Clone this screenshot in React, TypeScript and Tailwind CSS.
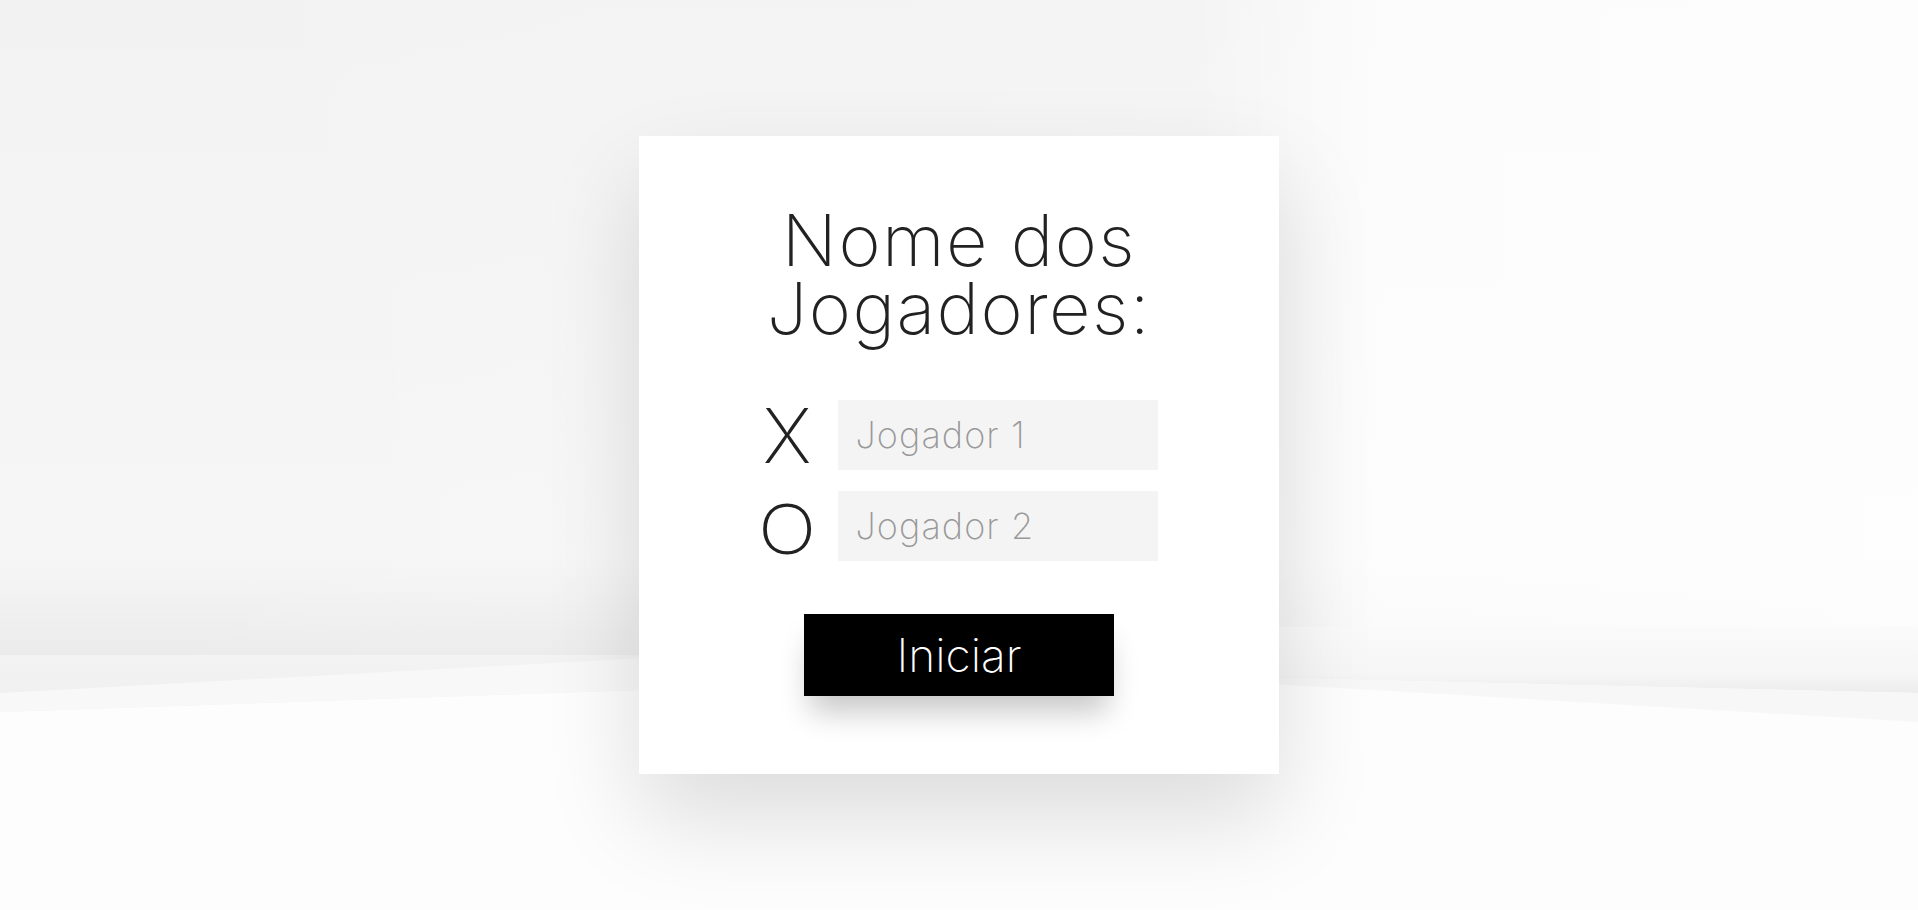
import { useState } from "react";

function Backdrop() {
  return (
    <svg
      className="absolute inset-0 h-full w-full"
      viewBox="0 0 1918 910"
      preserveAspectRatio="none"
    >
      <defs>
        <linearGradient id="wall" x1="0" y1="0" x2="0" y2="1">
          <stop offset="0" stopColor="#f2f2f2" />
          <stop offset="0.85" stopColor="#f6f6f6" />
          <stop offset="1" stopColor="#ebebeb" />
        </linearGradient>
        <linearGradient id="wallSide" x1="0" y1="0" x2="1" y2="0">
          <stop offset="0" stopColor="#ffffff" stopOpacity="0" />
          <stop offset="0.62" stopColor="#ffffff" stopOpacity="0.15" />
          <stop offset="0.72" stopColor="#ffffff" stopOpacity="0.75" />
          <stop offset="1" stopColor="#ffffff" stopOpacity="0.85" />
        </linearGradient>
        <linearGradient id="bandL" x1="0" y1="0" x2="0" y2="1">
          <stop offset="0" stopColor="#f3f3f3" />
          <stop offset="1" stopColor="#efefef" />
        </linearGradient>
        <linearGradient id="bandR" x1="0" y1="0" x2="0" y2="1">
          <stop offset="0" stopColor="#fafafa" />
          <stop offset="0.7" stopColor="#f6f6f6" />
          <stop offset="1" stopColor="#ececec" />
        </linearGradient>
      </defs>
      <rect x="0" y="0" width="1918" height="910" fill="#fdfdfd" />
      <rect x="0" y="0" width="1918" height="655" fill="url(#wall)" />
      <rect x="0" y="0" width="1918" height="655" fill="url(#wallSide)" />
      <polygon points="0,655 700,655 700,688 0,712" fill="url(#bandL)" />
      <polygon points="0,693 700,655 700,688 0,712" fill="#f8f8f8" />
      <polygon points="1200,627 1918,627 1918,693 1200,676" fill="url(#bandR)" />
      <polygon points="1200,676 1918,693 1918,722 1200,680" fill="#f7f7f7" />
    </svg>
  );
}

export default function App() {
  const [players, setPlayers] = useState({ x: "", o: "" });

  return (
    <div className="relative h-[910px] w-full overflow-hidden font-['Inter',sans-serif] font-extralight">
      <Backdrop />
      <div className="relative flex h-full items-center justify-center">
        <div className="flex w-[640px] flex-col items-center bg-white pt-[70px] pb-[78px] shadow-[0_45px_90px_rgba(0,0,0,0.13)]">
          <h1 className="text-center text-[72px] leading-[68px] tracking-[0.02em] text-[#222]">
            Nome dos
            <br />
            Jogadores:
          </h1>

          <div className="mt-[58px] flex flex-col gap-[21px]">
            <div className="flex items-center gap-[24px]">
              <span className="flex h-[70px] w-[53px] items-center justify-center text-[76px] leading-none text-[#222]">
                X
              </span>
              <input
                value={players.x}
                onChange={(e) => setPlayers({ ...players, x: e.target.value })}
                placeholder="Jogador 1"
                className="h-[70px] w-[320px] bg-[#f4f4f4] px-[18px] text-[36px] tracking-[0.03em] text-[#555] outline-none placeholder:text-[#999]"
              />
            </div>
            <div className="flex items-center gap-[24px]">
              <span className="flex h-[70px] w-[53px] items-center justify-center font-['Lato',sans-serif] text-[71px] leading-none font-light text-[#222]">
                O
              </span>
              <input
                value={players.o}
                onChange={(e) => setPlayers({ ...players, o: e.target.value })}
                placeholder="Jogador 2"
                className="h-[70px] w-[320px] bg-[#f4f4f4] px-[18px] text-[36px] tracking-[0.03em] text-[#555] outline-none placeholder:text-[#999]"
              />
            </div>
          </div>

          <button className="mt-[53px] h-[82px] w-[310px] cursor-pointer bg-black text-[46px] text-white shadow-[0_22px_30px_-6px_rgba(0,0,0,0.22)]">
            Iniciar
          </button>
        </div>
      </div>
    </div>
  );
}
